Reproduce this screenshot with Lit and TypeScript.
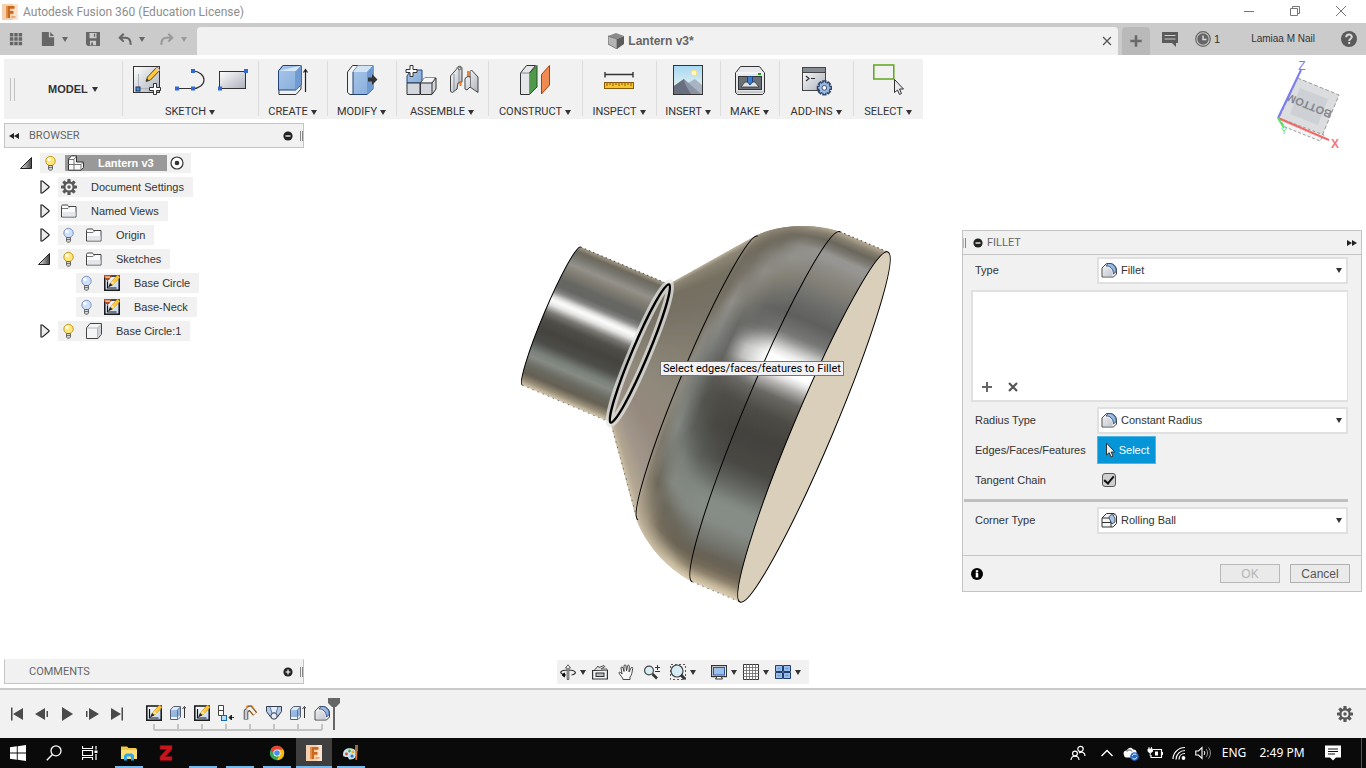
import { LitElement, html, css, svg } from "lit";
import { customElement, state } from "lit/decorators.js";

/* ---------- colour helpers for the shaded solid ---------- */
type RGB = [number, number, number];
type Stop = [number, string];

const rgb = (h: string): RGB => [
  parseInt(h.slice(1, 3), 16),
  parseInt(h.slice(3, 5), 16),
  parseInt(h.slice(5, 7), 16),
];
const mix = (a: RGB, b: RGB, k: number): RGB => [
  a[0] + (b[0] - a[0]) * k,
  a[1] + (b[1] - a[1]) * k,
  a[2] + (b[2] - a[2]) * k,
];
const sample = (p: Stop[], t: number): RGB => {
  for (let i = 1; i < p.length; i++) {
    if (t <= p[i][0]) {
      const k = (t - p[i - 1][0]) / (p[i][0] - p[i - 1][0]);
      return mix(rgb(p[i - 1][1]), rgb(p[i][1]), Math.max(0, k));
    }
  }
  return rgb(p[p.length - 1][1]);
};

/* Reflection profiles across the body: -1 is the upper silhouette, 1 the lower one. */
const NECK: Stop[] = [
  [-1, "#a69d89"], [-0.93, "#6b675c"], [-0.85, "#77766f"], [-0.74, "#94928b"], [-0.64, "#827e74"], [-0.5, "#666762"],
  [-0.4, "#666764"], [-0.32, "#858583"], [-0.26, "#d8d8d7"], [-0.21, "#ffffff"], [-0.14, "#e6e6e4"], [-0.04, "#7a7974"], [0.06, "#504e49"],
  [0.22, "#45433e"], [0.38, "#4c4d49"], [0.52, "#7a807a"], [0.6, "#868b84"], [0.72, "#6a6a62"], [0.84, "#655f52"], [0.93, "#9a8f79"], [1, "#d8ccb3"],
];
const RIM: Stop[] = [
  [-1, "#b9ad96"], [-0.95, "#6d685b"], [-0.92, "#6a675e"], [-0.86, "#9c9c98"], [-0.8, "#8e8d88"], [-0.73, "#87837a"],
  [-0.62, "#70716d"], [-0.5, "#5f605e"], [-0.39, "#7a7a78"], [-0.31, "#e2e2e1"], [-0.27, "#ffffff"], [-0.19, "#ffffff"], [-0.14, "#bab9b7"], [-0.07, "#6b6964"],
  [0.03, "#4e4c47"], [0.16, "#44423d"], [0.34, "#494844"], [0.45, "#646863"], [0.55, "#868c86"], [0.66, "#868c86"],
  [0.76, "#757770"], [0.85, "#655f52"], [0.92, "#7b705d"], [0.97, "#c1b498"], [1, "#dfd2b8"],
];
const BEND_D: Stop[] = [
  [-1, "#a99f8b"], [-0.94, "#6d685b"], [-0.87, "#8b8a84"], [-0.8, "#93928d"], [-0.68, "#858176"], [-0.5, "#656663"],
  [-0.38, "#6c6d6b"], [-0.27, "#c0c0bf"], [-0.21, "#c8c8c6"], [-0.12, "#74736f"], [0.02, "#4e4c47"], [0.2, "#494843"],
  [0.38, "#595c58"], [0.52, "#808680"], [0.65, "#858a84"], [0.78, "#6a665a"], [0.88, "#6c6454"], [0.96, "#c1b498"], [1, "#d8ccb3"],
];
const BEND_C: Stop[] = [
  [-1, "#8f8777"], [-0.92, "#6b665a"], [-0.8, "#84827b"], [-0.7, "#8e8d87"], [-0.55, "#7f7d74"], [-0.38, "#686965"],
  [-0.24, "#6a6a68"], [-0.1, "#5c5c58"], [0.1, "#52524d"], [0.28, "#5d5f5b"], [0.45, "#7c827c"], [0.6, "#848981"], [0.74, "#6a665a"],
  [0.86, "#746c5c"], [0.96, "#baae95"], [1, "#cfc3ab"],
];
const BEND_B: Stop[] = [
  [-1, "#8f8777"], [-0.88, "#6e695c"], [-0.7, "#79756b"], [-0.5, "#8f8e88"], [-0.32, "#858783"], [-0.1, "#737672"],
  [0.1, "#757a75"], [0.3, "#838882"], [0.5, "#787971"], [0.66, "#6c675a"], [0.82, "#8c8370"], [0.94, "#b4a890"], [1, "#cfc3ab"],
];
const BEND_A: Stop[] = [
  [-1, "#9a917e"], [-0.85, "#736d60"], [-0.55, "#736e61"], [-0.3, "#86837a"], [-0.05, "#8b8b83"], [0.2, "#87857b"],
  [0.45, "#7d776a"], [0.7, "#8a806f"], [0.9, "#b0a48d"], [1, "#d0c4ab"],
];
const CONE: Stop[] = [
  [-1, "#c3b9a4"], [-0.9, "#8c8575"], [-0.72, "#756f61"], [-0.45, "#777265"], [-0.1, "#868073"], [0.15, "#8f897c"],
  [0.45, "#94897c"], [0.7, "#a1968a"], [0.88, "#b3a792"], [1, "#d8ccb4"],
];
const BEND_KEYS: [number, Stop[]][] = [
  [0, CONE], [0.1, BEND_A], [0.28, BEND_B], [0.5, BEND_C], [0.72, BEND_D], [1, RIM],
];

const RATIO = 0.104;
const bend = (k: number): [number, number] => {
  const m = 1 - k;
  const f = (a: number, b: number, c: number, d: number) =>
    m * m * m * a + 3 * m * m * k * b + 3 * m * k * k * c + k * k * k * d;
  return [f(-126, -110, -80, -52), f(155, 173, 188, 190)];
};

@customElement("solid-scene")
export class SolidScene extends LitElement {
  static styles = css`
    :host { display: block; }
    .scene { display: block; width: 400px; height: 400px; }
  `;

  private grad(id: string, a: number, at: (t: number) => RGB) {
    const n = 60;
    return svg`<linearGradient id=${id} gradientUnits="userSpaceOnUse" x1="0" x2="0" y1=${-a} y2=${a}>
      ${Array.from({ length: n + 1 }, (_, i) => {
        const c = at((i / n) * 2 - 1).map(Math.round);
        return svg`<stop offset=${i / n} stop-color=${`rgb(${c.join(",")})`}></stop>`;
      })}
    </linearGradient>`;
  }

  private body(u: number, a: number, right: number) {
    return `M${u} ${-a}A${a * RATIO} ${a} 0 0 0 ${u} ${a}H${right}V${-a}Z`;
  }

  render() {
    const strips: { u: number; a: number; at: (t: number) => RGB; r: number }[] = [];
    for (let i = 0; i <= 60; i++) {
      const k = i / 60;
      strips.push({ u: -189 + 63 * k, a: 75 + 80 * k, at: (t) => sample(CONE, t), r: -189 + 63 * k + 2 });
    }
    for (let i = 0; i <= 60; i++) {
      const k = i / 60;
      const [u, a] = bend(k);
      let j = 1;
      while (j < BEND_KEYS.length - 1 && k > BEND_KEYS[j][0]) j++;
      const [k0, p0] = BEND_KEYS[j - 1];
      const [k1, p1] = BEND_KEYS[j];
      const q = (k - k0) / (k1 - k0);
      strips.push({ u, a, at: (t) => mix(sample(p0, t), sample(p1, t), q), r: u + 2 });
    }
    const arc = (u: number, a: number) => `M${u} ${-a}A${a * RATIO} ${a} 0 0 0 ${u} ${a}`;
    return html`<svg class="scene" viewBox="510 215 400 400" role="img" aria-label="Lantern body">
      <g transform="translate(814 427) rotate(22.9)">
        <defs>
          ${this.grad("neck", 75, (t) => sample(NECK, t))}
          ${this.grad("rim", 190, (t) => sample(RIM, t))}
          ${strips.map((s, i) => this.grad(`s${i}`, s.a, s.at))}
        </defs>
        <path d=${this.body(-285, 75, -185)} fill="url(#neck)"></path>
        ${strips.map((s, i) => svg`<path d=${this.body(s.u, s.a, s.r)} fill=${`url(#s${i})`}></path>`)}
        <path d=${this.body(-52, 190, 0)} fill="url(#rim)"></path>
        <ellipse rx="19.8" ry="190" fill="#dacfbb" stroke="#000"></ellipse>
        <g fill="none" stroke="#000">
          <path d=${arc(-52, 190)}></path>
          <path d=${arc(-126, 154)}></path>
          <path d=${arc(-285, 75)}></path>
          <path d="M-285 -75H-189" stroke-dasharray="1.5 3" stroke-opacity=".65"></path>
          <path d="M-52 -190H0" stroke-dasharray="1.5 3" stroke-opacity=".65"></path>
          <path d="M-285 75H-189L-126 155M-52 190H0" stroke-dasharray="1.5 4" stroke-opacity=".45"></path>
        </g>
        <ellipse cx="-189" rx="8" ry="76" fill="none" stroke="#e4e4e2" stroke-opacity=".75" stroke-width="8"></ellipse>
        <ellipse cx="-189" rx="8" ry="75" fill="none" stroke="#000" stroke-width="2.4"></ellipse>
      </g>
    </svg>`;
  }
}

/* ---------- icon glyphs ---------- */
const bulb = (on: boolean) => svg`
  <circle cx="7.5" cy="6" r="4.7" fill=${on ? "#ffe877" : "#cfe0fb"} stroke=${on ? "#c39a1c" : "#7d93c4"}></circle>
  <circle cx="6" cy="4.5" r="1.8" fill="#fff" opacity=".85"></circle>
  <path d="M5.5 10.5h4v3.5l-1 1.2H6.5l-1-1.2z" fill="#d5d5d5" stroke="#5c5c5c" stroke-width=".9"></path><path d="M5.5 12.5h4" stroke="#5c5c5c" stroke-width=".8"></path>`;

const gear = (c: string, hole: string) => svg`
  <g fill=${c}>${[0, 45, 90, 135].map((a) => svg`<rect x="6.4" y="0" width="3.2" height="16" rx=".6" transform=${`rotate(${a} 8 8)`}></rect>`)}
  <circle cx="8" cy="8" r="5.7"></circle></g><circle cx="8" cy="8" r="3.5" fill=${hole}></circle><circle cx="8" cy="8" r="1.7" fill=${c}></circle>`;

const extrude = svg`
  <path d="M.5 4.5L3.5 1.500H10.500V12l-2.500 2.500H.5z" fill="#f4f5f7" stroke="#566073"></path>
  <path d="M1 5l3-3H10v8.500L7.500 12H1z" fill="url(#gBlue)"></path><path d="M1 5l3-3h6L7.500 5z" fill="#dce8f7"></path>
  <path d="M7.500 5v9.500M7.500 5L10.500 2" fill="none" stroke="#54709b" stroke-width=".9"></path>
  <path d="M14.500 13V2.500" stroke="#333"></path><path d="M12.500 4l2-2.500 1.500 2" fill="none" stroke="#333"></path>`;

const sketchSmall = svg`
  <rect x=".8" y="1" width="14.4" height="14.2" fill="url(#gPale)" stroke="#111" stroke-width="1.5"></rect>
  <path d="M3.500 4v9h9" fill="none" stroke="#111" stroke-width="1.2"></path>
  <path d="M5.500 11l1.500-4L13.500 0l2.500 2.300L9.500 9.500z" fill="#ffc93a" stroke="#c8921c" stroke-width=".6"></path><path d="M4 12.500l2-4.500 2.500 2.300z" fill="#222"></path><path d="M7 7.300l1.200-1.300 2.500 2.300-1.200 1.200z" fill="#ffe9a8"></path>`;

const filletIcon = svg`
  <path d="M1 15V6l4.500-4.500h4c3.500.5 6 3.200 6 7V12l-3 3z" fill="#f5f6f8" stroke="#444"></path>
  <path d="M5 4c3.500-.5 7.300 2.500 7.500 8l2.700-2.500c.2-4.500-2.500-7.500-6.200-8H7z" fill="url(#gBlue)" stroke="#2c4a78" stroke-width=".9"></path>
  <path d="M2 14.300V7l2-2c4.500 0 7.500 3 7.700 9.300z" fill="url(#gPlate)"></path>`;

const fusion = svg`
  <rect width="16" height="16" fill="#fbe3cf"></rect><path d="M0 0h11v16H0z" fill="#f5cfae"></path>
  <path d="M4.500 2h8v2.800H8v2.300h3.500v2.600H8V14H4.500z" fill="#c9671c"></path><path d="M4.500 2H6v12H4.500z" fill="#e48a3a"></path>
  <path d="M9.500 13h4" stroke="#d78b52" stroke-width="1.200"></path>`;

const ICONS: Record<string, [number, unknown]> = {
  fusion: [16, fusion],
  grid: [16, svg`<path fill="#666" d="M1 1h4v4H1zM6 1h4v4H6zM11 1h4v4h-4zM1 6h4v4H1zM6 6h4v4H6zM11 6h4v4h-4zM1 11h4v4H1zM6 11h4v4H6zM11 11h4v4h-4z"></path>`],
  file: [16, svg`<path fill="#666" d="M1 0h8v6h6v10H1z"></path><path fill="#666" d="M10.500 0L15 4.500h-4.500z"></path>`],
  save: [16, svg`<path fill="#666" fill-rule="evenodd" d="M0 0h16v16H2l-2-2zM4 1v6h8V1zM4.500 10v5h7v-5zM9 2h1.500v3.500H9z"></path><path d="M6 12h2v3H6z" fill="#666"></path>`],
  undo: [16, svg`<path d="M6.500 2L2 6.500 6.500 11M2.500 6.500h6c4 0 6 2.500 6 8" fill="none" stroke="#666" stroke-width="2.400"></path>`],
  redo: [16, svg`<path d="M9.500 2L14 6.500 9.500 11M13.500 6.500h-6c-4 0-6 2.500-6 8" fill="none" stroke="#999" stroke-width="2.400"></path>`],
  docCube: [16, svg`<path d="M0 3l8-3 8 3-7 3z" fill="#8a8a8a"></path><path d="M0 3l9 3v10l-9-5z" fill="#b4b4b4" stroke="#666" stroke-width=".8"></path><path d="M9 6l7-3v8l-7 5z" fill="#5c5c5c"></path>`],
  cross: [16, svg`<path d="M3.500 3.500l9 9M12.500 3.500l-9 9" stroke="#555" stroke-width="1.500"></path>`],
  plusTab: [16, svg`<path d="M8 1.500v13M1.500 8h13" stroke="#6a6a6a" stroke-width="3"></path>`],
  comment: [16, svg`<path d="M0 1h16v11h-2v4l-4-4H0z" fill="#5a5a5a"></path><path d="M2.500 4.500h11M2.500 8h11" stroke="#ccc" stroke-width="1.200"></path>`],
  clock: [16, svg`<circle cx="8" cy="8" r="7.300" fill="none" stroke="#666" stroke-width="1.200"></circle><circle cx="8" cy="8" r="5.700" fill="#666"></circle><path d="M8 4.500V8.500h3.500" fill="none" stroke="#ddd" stroke-width="1.400"></path>`],
  help: [16, svg`<circle cx="8" cy="8" r="8" fill="#5a5a5a"></circle><path d="M5.200 6.200C5.200 2.600 11 2.800 10.800 6 10.700 7.800 8.200 7.800 8.200 10" fill="none" stroke="#d8d8d8" stroke-width="2"></path><rect x="7.200" y="11" width="2" height="2" fill="#d8d8d8"></rect>`],
  min: [16, svg`<path d="M3 7.500h10" stroke="#777"></path>`],
  restore: [16, svg`<path d="M3.500 5.500h7v7h-7zM5.500 5V3.500h7v7H11" fill="none" stroke="#777" transform="translate(0 -1)"></path>`],
  close: [16, svg`<path d="M3 2l10 10M13 2L3 12" stroke="#777"></path>`],
  sketch: [32, svg`<rect x="2.500" y="2.500" width="26" height="26" fill="url(#gGray)" stroke="#333"></rect>
    <path d="M7.500 10v14.500H22" fill="none" stroke="#aeb3bb"></path><rect x="5" y="23" width="4" height="4" fill="#3f8fe0" stroke="#235"></rect>
    <path d="M15 17.500l1.500-4.500L26 3l3 3-9.500 10z" fill="#ffca3a" stroke="#5b4716"></path><path d="M24.500 4.500L26 3l3 3-1.500 1.500z" fill="#e8cfc4"></path><path d="M15 17.500l1-3 2.200 2z" fill="#333"></path>
    <path d="M22.500 19.500h3v4h4v3h-4v4h-3v-4h-4v-3h4z" fill="#fff" stroke="#333"></path>`],
  arc: [32, svg`<path d="M3 24.500h16c6 0 11-4 11-8.500S25 7 19 7" fill="none" stroke="#333" stroke-width="1.200"></path><path d="M1 22.500h4v4H1zM17 22.500h4v4h-4zM17 5h4v4h-4z" fill="#2f6bd0"></path>`],
  rect: [32, svg`<rect x="2.500" y="7.500" width="26" height="17" fill="url(#gGray)" stroke="#333"></rect><path d="M27 5h4v4h-4zM1 22.500h4v4H1z" fill="#2f6bd0"></path>`],
  create: [32, svg`<path d="M1.500 7l4.500-5.500h18V25l-5 5.500h-17z" fill="#eef0f3" stroke="#333"></path><path d="M1.500 7l4.500-5.500h18V21l-5 5h-17.500z" fill="url(#gBlue)" stroke="#23447a"></path><path d="M1.500 7h17.500L24 1.500z" fill="#d7e6f8"></path><path d="M19 7v19" stroke="#5b82b8"></path><path d="M19 7l5-5.500V21l-5 5z" fill="#6f9bd2"></path>
    <path d="M28.500 28V6M26.500 8.500l2-3 2 3" fill="none" stroke="#222" stroke-width="1.200"></path>`],
  modify: [32, svg`<path d="M1.500 8l5-6.500h10L11 8v22.500H4l-2.500-2z" fill="#f2f3f5" stroke="#333"></path><path d="M7 8l5-6.500h15V25l-6 5.500H7z" fill="url(#gBlue)" stroke="#23447a"></path><path d="M7 8h14l6-6.500H12z" fill="#d4e4f7"></path><path d="M21 8l6-6.500V25l-6 5.500z" fill="#6f9bd2"></path><path d="M22 13.500h4V10l5.500 5.500L26 21v-3.500h-4z" fill="#333"></path>`],
  assemble: [32, svg`<path d="M2 12l4-6h11v13H2z" fill="url(#gBlue)" stroke="#23447a"></path><path d="M2 19h13v11.500H2z" fill="#d3d6dc" stroke="#333"></path><path d="M15.500 19l4-5H31v11l-4 5.500H15.500z" fill="#d3d6dc" stroke="#333"></path><path d="M15.500 19H27v11M27 19l4-5" fill="none" stroke="#333"></path><path d="M16.500 18l3-4h10l-3 4z" fill="#f4f5f6"></path>
    <path d="M5 1.500h3v4h4v3H8v4H5v-4H1v-3h4z" fill="#fff" stroke="#333"></path>`],
  joint: [32, svg`<path d="M2.500 12L9 4.500c0-3 5-3 5 0V18l-4 1-1 6-4.500 3.500-2-1z" fill="url(#gGray)" stroke="#444"></path><path d="M6 10v17M11 4v14" stroke="#8b8f96"></path><circle cx="11.500" cy="4.500" r="1.300" fill="#ddd" stroke="#444" stroke-width=".8"></circle><path d="M12.500 17v5M20 7v7" stroke="#f07316" stroke-width="1.800"></path>
    <path d="M17 25V15c0-2 4-3 5-2V7.500L23.500 6 30 13v15.500L22 23l-3 3z" fill="url(#gGray)" stroke="#444"></path><path d="M22.500 12v11" stroke="#777"></path>`],
  construct: [32, svg`<path d="M1.500 9l6-7.500h9l-6 7.500v21.500h-9z" fill="#e4e6e9" stroke="#333"></path><path d="M10.500 9l7.500-7.500V23l-7.500 7.500z" fill="#4f9a4a" stroke="#24521f"></path><path d="M1.500 9h9v21.500" fill="none" stroke="#888"></path><path d="M22.500 10.500L30.500 1.500V21l-8 9z" fill="#ee8a52" stroke="#a3430f"></path>`],
  inspect: [32, svg`<path d="M2 10.500h28M2 8v5.500M30 8v5.500" stroke="#333" stroke-width="1.400"></path><rect x="1.500" y="18.500" width="29" height="6" fill="#f4c62a" stroke="#8a5a10"></rect><path d="M4 19v3M7 19v2M10 19v3M13 19v2M16 19v3M19 19v2M22 19v3M25 19v2M28 19v3" stroke="#8a5a10"></path>`],
  insert: [32, svg`<rect x="1.500" y="1.500" width="29" height="29" fill="url(#gSky)" stroke="#333"></rect><circle cx="22" cy="9" r="3" fill="#fff7c9" stroke="#f5d97a"></circle><path d="M16 19l7-4 7 6v9H18z" fill="#a8b4c4"></path><path d="M2 22l10-7 17 15H2z" fill="#8b93a3"></path><path d="M2 22l10-7 1 5 6 10H2z" fill="#676f80"></path>`],
  make: [32, svg`<path d="M1.500 9l5-6.500h19l5 6.500v19.500l-2 2h-25l-2-2z" fill="#e6e8ec" stroke="#333"></path><path d="M2 9h28" stroke="#fff"></path><rect x="4.500" y="12.500" width="23" height="13" fill="#6a7078" stroke="#333"></rect><path d="M7 23l4-5h10l4 5z" fill="#dfe3e8" stroke="#333" stroke-width=".8"></path><path d="M2 28h28" stroke="#aaa"></path><path d="M13.500 12.500h5V18L16 21l-2.500-3z" fill="#3c7fd0" stroke="#1e4680"></path><rect x="24" y="9" width="3" height="2" fill="#1a9a2a"></rect>`],
  addins: [32, svg`<rect x="2.500" y="3.500" width="23" height="23" fill="url(#gGray)" stroke="#444"></rect><path d="M3 4h22v4H3z" fill="#868c96"></path><path d="M3 8.500h22" stroke="#444"></path><path d="M6 12l3 2.500L6 17M11 14.500h4" fill="none" stroke="#333" stroke-width="1.200"></path>
    <g transform="translate(17 16.500) scale(.92)"><g stroke="#2b4268" stroke-width="1.500">${[0, 45, 90, 135].map((a) => svg`<rect x="6.400" y=".5" width="3.200" height="15" fill="#9fbbe3" transform=${`rotate(${a} 8 8)`}></rect>`)}</g><circle cx="8" cy="8" r="5.600" fill="#9fbbe3"></circle><circle cx="8" cy="8" r="2.600" fill="#fff" stroke="#2b4268"></circle></g>`],
  select: [32, svg`<rect x="1.800" y="1" width="20" height="14" fill="none" stroke="#5fa51c" stroke-width="1.500"></rect><path d="M22.500 15.500v13l3-2.500 2 4.500 2-1-2-4.500h4z" fill="#e9ebee" stroke="#333"></path>`],
  bulbOn: [16, bulb(true)],
  bulbOff: [16, bulb(false)],
  gear: [16, gear("#585858", "#f1f1f1")],
  component: [16, svg`<path d="M.5 4L3.500.8H8.500V7H15.500V12.500l-2.500 2.700H.5z" fill="#fafafa" stroke="#333"></path><path d="M.5 4.500H6v10.500M6 4.500L8.500 1M.5 9.500h12.500V15M13 9.500L15.500 7" fill="none" stroke="#666" stroke-width=".9"></path>`],
  folder: [16, svg`<path d="M.5 3.500c0-1 .5-1.500 1.500-1.500H6c1 0 1 .5 1.500 1.500h7.500V14H.5z" fill="#fafbfc" stroke="#444"></path><path d="M1 5.500H7L8.500 4" fill="none" stroke="#777"></path><path d="M1.500 9h13v4.500h-13z" fill="#e3e6ea"></path>`],
  body: [16, svg`<path d="M.5 5l3.500-4.500h11.500V11L12 15.500H.5z" fill="#f4f5f6" stroke="#444" stroke-linejoin="round"></path><path d="M11.500 5L15 1.500V11l-3.500 4z" fill="#cfd2d6"></path><path d="M11.500 5v10M1.500 5h10L15 1.500" fill="none" stroke="#aaa" stroke-width=".8"></path>`],
  sketchPin: [16, svg`${sketchSmall}<path d="M0 .8h7L5.500 3.500h-4zM1.500 4.500h4" fill="#e8c39a" stroke="#b8491c"></path><path d="M3.500 4v3" stroke="#b8491c"></path>`],
  sketchS: [16, sketchSmall],
  extrude: [16, extrude],
  fillet: [16, filletIcon],
  ball: [16, svg`<path d="M1 6l4.500-4.500H13L15.500 4v7.500L12 15H1z" fill="#f6f7f8" stroke="#333"></path><path d="M1 6h9v9M1 10.500h9M10 6l4-4.500" fill="none" stroke="#333"></path><path d="M8 6c0-2 1.500-3.500 3.500-3.500L14 6v4l-3 2z" fill="#a9c5ea" stroke="#333" stroke-width=".8"></path>`],
  cursor: [16, svg`<path d="M4.500 1v12l2.700-2.300L9 15l2-.9-1.800-4.100h3.600z" fill="#ececec" stroke="#333"></path>`],
  target: [16, svg`<circle cx="8" cy="8" r="6" fill="#fff" stroke="#333" stroke-width="1.200"></circle><circle cx="8" cy="8" r="2.300" fill="#333"></circle>`],
  tri: [16, svg`<path d="M4 2v12h1.500L12 8.500v-1L5.500 2z" fill="#ececec" stroke="#222" stroke-width="1.200"></path>`],
  triOpen: [16, svg`<path d="M1.500 13.500h11v-11z" fill="url(#gTri)" stroke="#222"></path>`],
  minus: [10, svg`<circle cx="5" cy="5" r="4.600" fill="#222"></circle><path d="M2.500 5h5" stroke="#fff" stroke-width="1.300"></path>`],
  plus: [10, svg`<circle cx="5" cy="5" r="4.600" fill="#222"></circle><path d="M2.500 5h5M5 2.500v5" stroke="#fff" stroke-width="1.200"></path>`],
  info: [12, svg`<circle cx="6" cy="6" r="6" fill="#000"></circle><path d="M5 5h2v4H5zM4.500 5H6M4.500 9h3M5 2.500h2v1.500H5z" fill="#fff" stroke="#fff" stroke-width=".5"></path>`],
  back: [10, svg`<path d="M5 2v6L0 5zM10 2v6L5 5z" fill="#222"></path>`],
  fwd: [10, svg`<path d="M0 2v6l5-3zM5 2v6l5-3z" fill="#222"></path>`],
  add: [12, svg`<path d="M6 1v10M1 6h10" stroke="#666" stroke-width="2"></path>`],
  del: [12, svg`<path d="M2 2l8 8M10 2l-8 8" stroke="#555" stroke-width="2.200"></path>`],
  orbit: [16, svg`<path d="M4 10.500C-1 9.500-.5 6 8 6s9.500 4 3.500 5" fill="none" stroke="#333" stroke-width="1.200"></path><path d="M7.200 15.500V4H5.500L8 .8 10.500 4H8.800v11.500z" fill="#fff" stroke="#333" stroke-width=".8"></path><path d="M6 11H3M4.500 9L2 11l2.500 2z" fill="#111" stroke="#111"></path>`],
  look: [16, svg`<path d="M.6 6.500h14.800V15H.6z" fill="#f4f5f6" stroke="#333" stroke-width="1.200"></path><path d="M2.500 6L6 2l1 1.500L12 1.500l1 1-4 2.500h6v1.500" fill="#ddd" stroke="#555"></path><rect x="4" y="9" width="8" height="3.500" fill="#b5bac3" stroke="#333"></rect>`],
  hand: [16, svg`<path d="M5 15.500c0-2-3-4-4-6.500 0-1.500 1.500-1 3 1L3 4c0-1.500 1.500-1.500 2 0l1 3.500V2c0-1.500 2-1.500 2 0l.5 5L9.500 2c.5-1.500 2-1 1.800.5L11 8l2-4c.6-1.300 2-.8 1.700.5C14 8 14 11 12 13v2.500z" fill="#f7f7f7" stroke="#333" stroke-width=".9"></path>`],
  zoomPm: [16, svg`<circle cx="5" cy="6.500" r="4.400" fill="#d6edf5" stroke="#444" stroke-width="1.200"></circle><path d="M8.500 10l4.500 4.500" stroke="#333" stroke-width="2.600"></path><path d="M13.500 1v5M11 3.500h5M11 7.500h5" stroke="#333"></path>`],
  fit: [16, svg`<path d="M.5 4V.5h15v15H.5z" fill="none" stroke="#555" stroke-dasharray="2 2"></path><circle cx="7" cy="7" r="6" fill="#d6edf5" stroke="#444" stroke-width="1.200"></circle><path d="M11 11l4 4" stroke="#333" stroke-width="3"></path>`],
  display: [16, svg`<rect x=".6" y="1.600" width="15" height="11" fill="#e8ebef" stroke="#333" stroke-width="1.200"></rect><rect x="2.500" y="3.500" width="11" height="7.500" fill="#9dbfea" stroke="#2b58a0"></rect><path d="M6 12.500h4l1.500 2.500h-7z" fill="#fff" stroke="#333"></path>`],
  mesh: [16, svg`<path d="M.5.5h15v15H.5z" fill="#fff" stroke="#333"></path><path d="M3.500 0v16M6.500 0v16M9.500 0v16M12.500 0v16M0 3.500h16M0 6.500h16M0 9.500h16M0 12.500h16" stroke="#666" stroke-width=".8"></path>`],
  panes: [16, svg`<path d="M.5 1.500h7v6h-7zM8.500 1.500h7v6h-7zM.5 8.500h7v6h-7zM8.500 8.500h7v6h-7z" fill="#9dbfea" stroke="#1f3f70"></path><path d="M2.500 4.500h3M10.500 4.500h3M2.500 11.500h3M10.500 11.500h3" stroke="#6d99d6" stroke-width="1.500"></path>`],
  first: [16, svg`<path d="M2 1.500h1.500v13H2zM14 2v12L4 8z" fill="#4a4a4a"></path>`],
  prev: [16, svg`<path d="M11 2v12L1 8zM12.500 5H14v6h-1.500z" fill="#4a4a4a"></path>`],
  play: [16, svg`<path d="M3 1v14l11-7z" fill="#4a4a4a"></path>`],
  next: [16, svg`<path d="M5 2v12l10-6zM2 5h1.500v6H2z" fill="#4a4a4a"></path>`],
  last: [16, svg`<path d="M12.500 1.500H14v13h-1.500zM2 2v12l10-6z" fill="#4a4a4a"></path>`],
  move: [16, svg`<path d="M.5.5h5v10h-5zM.5 5.500h5" fill="#fff" stroke="#444"></path><rect x="3.500" y="10.500" width="5" height="5" fill="#b7dcf7" stroke="#1467b8"></rect><path d="M16 12.500h-4M13.500 10v5L11 12.500z" fill="#111" stroke="#111" stroke-width=".8"></path>`],
  jointS: [16, svg`<g fill="none" stroke-linejoin="round"><path d="M5 4l3-1.500L13 9" stroke="#ef8a17" stroke-width="6"></path><path d="M4 14.500V6L8 3l5 6" stroke="#444" stroke-width="4.500"></path><path d="M5 4.500L8 3l5 6" stroke="#fbeedd" stroke-width="3"></path><path d="M4 14V6l2-1.500" stroke="#c9ccd1" stroke-width="2.800"></path></g>`],
  revolve: [16, svg`<path d="M.5 1.500h15v5L11.500 12c-2 2-5 2-7 0L.5 6.500z" fill="#b7cae6" stroke="#333c4d"></path><path d="M4 2h8L10 7.500H6z" fill="#e4ecf7"></path><path d="M4 2l2 6M12 2l-2 6" fill="none" stroke="#5c78a5"></path><circle cx="8" cy="11" r="3.200" fill="#e9edf3" stroke="#333c4d"></circle>`],
  win: [16, svg`<path d="M0 2.300L6.800 1.300V7.600H0zM7.700 1.200L16 0V7.600H7.700zM0 8.400h6.800v6.300L0 13.700zM7.700 8.400H16V16l-8.300-1.200z" fill="#fff"></path>`],
  search: [16, svg`<circle cx="10" cy="5.800" r="5" fill="none" stroke="#fff" stroke-width="1.300"></circle><path d="M6.500 9.500L.8 15.200" stroke="#fff" stroke-width="1.400"></path>`],
  task: [16, svg`<path d="M.5 5.500h10v5h-10zM.5 1v2.500h10V1M.5 15v-2.500h10V15M14 1v3.500M14 9v6" fill="none" stroke="#fff" stroke-width="1.200"></path><path d="M12.500 5.500h3v2.500h-3z" fill="#fff"></path>`],
  explorer: [16, svg`<path d="M0 1.500h6l1.500 1.500H15l1 1.500V14H0z" fill="#f3c846"></path><path d="M0 5h16v9H0z" fill="#fddf77"></path><path d="M3 15.500V10.500l2-2h6l2 2v5h-3v-4H6v4z" fill="#2fa8e8"></path>`],
  zed: [16, svg`<path d="M2 .5h12v4L7.500 11.500H14v4H2v-4L8.500 4.500H2z" fill="#c9141c" stroke="#7a0a10" stroke-width=".6"></path>`],
  chrome: [16, svg`<circle cx="8" cy="8" r="7.200" fill="#34a853"></circle><path d="M1.800 4.400a7.200 7.200 0 0 1 12.400 0L8 8z" fill="#ea4335"></path><path d="M14.300 4.500A7.200 7.200 0 0 1 8 15.200L11 8l-3-3.500z" fill="#fbbc05"></path><path d="M1.800 4.400L5.500 10 8 5h6.600z" fill="#ea4335"></path><circle cx="8" cy="8" r="3.600" fill="#fff"></circle><circle cx="8" cy="8" r="2.800" fill="#4a8af4"></circle>`],
  paint: [16, svg`<path d="M0 9.500C0 4 5 2.500 9 3.500s5 4 4 7-3 4-6 4C5 14.500 6 12 4 12S0 12 0 9.500z" fill="#c9e3ef"></path><circle cx="3.500" cy="9" r="1.400" fill="#e0482c"></circle><circle cx="6.500" cy="6" r="1.400" fill="#49a942"></circle><circle cx="10" cy="7" r="1.400" fill="#f2b21b"></circle><circle cx="9" cy="11" r="1.600" fill="#2d6fc4"></circle><path d="M12.200 6h2.300L14 15h-1.500z" fill="#d9752b"></path><path d="M12 0h3v6h-3z" fill="#9a6a3c"></path>`],
  people: [16, svg`<circle cx="10.500" cy="4" r="2.700" fill="none" stroke="#fff" stroke-width="1.200"></circle><circle cx="5" cy="8.500" r="2.400" fill="none" stroke="#fff" stroke-width="1.200"></circle><path d="M1 15c.3-5 7.700-5 8 0M9 8c3-2 6-.5 6 3" fill="none" stroke="#fff" stroke-width="1.200"></path>`],
  chev: [16, svg`<path d="M2.500 11L8 5.500 13.500 11" fill="none" stroke="#fff" stroke-width="1.400"></path>`],
  cloud: [16, svg`<path d="M1 10c-1.500-3 1-5 3-4.500C5 2 9 2 10 4.500c2-.5 4 1 3.500 4L9 12.500H3C2 12.500 1 11.500 1 10z" fill="#fff"></path><path d="M4 6.500c1-2 4-2 5 0" fill="none" stroke="#222" stroke-width=".8"></path><circle cx="11.500" cy="11.500" r="4.300" fill="#2468c8"></circle><path d="M9.300 11c.5-2.500 3.500-2.500 4.300-.8M13.700 12c-.5 2.500-3.500 2.500-4.300.8" fill="none" stroke="#fff"></path>`],
  battery: [16, svg`<path d="M6 4.500h8.500v8H4V10M15.500 7v3" fill="none" stroke="#fff" stroke-width="1.200"></path><path d="M8 6.500h3v4H8z" fill="#fff"></path><path d="M1 4h4.500v2.500L3.200 8 1 6.500zM2 2v2M4.500 2v2M3.200 8v3" fill="#fff" stroke="#fff" stroke-width=".9"></path>`],
  wifi: [16, svg`<g fill="none" stroke="#fff" stroke-width="1.200"><path d="M2 14C2 7.500 7.500 2.500 14 2.500"></path><path d="M5 14.500c0-5 4-9 9-9"></path><path d="M8 14.500c0-3.500 2.500-6 6-6"></path></g><circle cx="12.500" cy="13" r="1.900" fill="#fff"></circle>`],
  vol: [16, svg`<path d="M.8 6H3.500L7 2.500v11L3.500 10H.8z" fill="none" stroke="#fff" stroke-width="1.100"></path><path d="M9 6c1 1 1 3 0 4" fill="none" stroke="#fff"></path><path d="M11 4c2 2 2 6 0 8M13.500 2.500c2.500 3 2.500 8 0 11" fill="none" stroke="#999"></path>`],
  notif: [16, svg`<path d="M0 .5h16v12h-5L8 15.500l-3-3H0z" fill="#fff"></path><path d="M3 4h10M3 6.500h10M3 9h7" stroke="#111" stroke-width="1.200"></path>`],
};

interface Row { level: number; label: string; icon: string; bulb?: "bulbOn" | "bulbOff"; toggle?: "tri" | "triOpen"; }

const TREE: Row[] = [
  { level: 1, label: "Document Settings", icon: "gear", toggle: "tri" },
  { level: 1, label: "Named Views", icon: "folder", toggle: "tri" },
  { level: 1, label: "Origin", icon: "folder", bulb: "bulbOff", toggle: "tri" },
  { level: 1, label: "Sketches", icon: "folder", bulb: "bulbOn", toggle: "triOpen" },
  { level: 2, label: "Base Circle", icon: "sketchPin", bulb: "bulbOff" },
  { level: 2, label: "Base-Neck", icon: "sketchPin", bulb: "bulbOff" },
  { level: 1, label: "Base Circle:1", icon: "body", bulb: "bulbOn", toggle: "tri" },
];

const TOOLS: [string, string[]][] = [
  ["SKETCH", ["sketch", "arc", "rect"]],
  ["CREATE", ["create"]],
  ["MODIFY", ["modify"]],
  ["ASSEMBLE", ["assemble", "joint"]],
  ["CONSTRUCT", ["construct"]],
  ["INSPECT", ["inspect"]],
  ["INSERT", ["insert"]],
  ["MAKE", ["make"]],
  ["ADD-INS", ["addins"]],
  ["SELECT", ["select"]],
];

@customElement("app-root")
export class AppRoot extends LitElement {
  @state() private tangent = true;

  static styles = css`
    :host {
      display: flex; flex-direction: column; height: 100vh; overflow: hidden;
      background: #fff; color: #333;
      font: 11px/14px "Liberation Sans", Arial, sans-serif;
    }
    * { box-sizing: border-box; }
    button { font: inherit; color: inherit; background: none; border: 0; padding: 0; margin: 0; display: flex; align-items: center; justify-content: center; }
    svg { display: block; flex: none; }
    .defs { position: absolute; }
    .caret { width: 6px; height: 5px; }

    .title { height: 23px; flex: none; display: flex; align-items: center; gap: 5px; padding: 0 2px; color: #8d8d8d; font: 12px/16px Roboto, sans-serif; }
    .title .name { flex: 1; }
    .title button { width: 46px; height: 22px; }
    .wins { display: flex; }

    .tabs { height: 32px; flex: none; display: flex; align-items: flex-end; background: #cbcbcb; }
    .quick { display: flex; align-items: center; gap: 18px; padding: 0 10px 0 9px; align-self: center; }
    .quick button { gap: 7px; }
    .pair { display: flex; gap: 15px; }
    .tab { flex: 1; height: 28px; background: #f1f1f1; border-radius: 4px 4px 0 0; display: flex; align-items: center; padding-left: 10px; }
    .tab .doc { flex: 1; display: flex; align-items: center; justify-content: center; gap: 4px; color: #666; font-weight: bold; font-size: 12px; }
    .tab .x { width: 23px; height: 28px; }
    .newtab { width: 28px; height: 28px; margin-left: 4px; background: #b9b9b9; border-radius: 4px 4px 0 0; }
    .account { width: 216px; height: 32px; display: flex; align-items: center; padding: 0 9px 0 12px; }
    .jobs { gap: 3px; margin-left: 17px; }
    .user { margin: 0 auto 0 31px; font-size: 10px; }

    .work { flex: 1; min-height: 0; position: relative; display: flex; flex-direction: column; padding: 4px; }
    .ribbon { height: 60px; flex: none; width: max-content; background: #f1f1f1; display: grid; grid-template-columns: 118px 136px 69px 69px 92px 94px 74px 64px 59px 74px 70px; }
    .group { display: flex; flex-direction: column; align-items: center; justify-content: space-between; padding-top: 5px; position: relative; }
    .group::before { content: ""; position: absolute; left: 0; top: 2px; bottom: 3px; width: 1px; background: #dcdcdc; }
    .icons { display: flex; gap: 11px; }
    .menu { gap: 3px; font: 11px/14px Roboto, sans-serif; }
    .mode { display: flex; align-items: center; padding-left: 6px; }
    .grip { width: 5px; height: 23px; border: solid #c2c2c2; border-width: 0 1px; }
    .mode button { margin-left: 33px; gap: 4px; font-weight: bold; }

    .bar { width: 300px; height: 25px; flex: none; display: flex; align-items: center; border: 1px solid #c4c4c4; background: #f1f1f1; padding: 0 0 0 4px; color: #666; font: 11px/14px Roboto, sans-serif; }
    .bar .cap { flex: 1; margin-left: 10px; }
    .bar.comments .cap { margin-left: 20px; }
    .bar.comments { border-top-color: #f1f1f1; }
    .edge { width: 3px; height: 10px; border: solid #888; border-width: 0 1px; margin-left: 7px; }
    .browser { margin-top: 4px; }

    .tree { list-style: none; margin: 5px 0 0; padding: 0 0 0 14px; flex: 1; }
    .row { display: flex; align-items: center; height: 20px; margin-bottom: 4px; }
    .toggle { width: 18px; height: 16px; margin-right: 4px; }
    .item { display: flex; align-items: center; height: 20px; background: #f1f1f1; padding-right: 9px; }
    .l1 { padding-left: 18px; }
    .l2 { padding-left: 36px; }
    .slot { width: 22px; display: flex; justify-content: center; }
    .eye { margin-right: 3px; }
    .text { margin-left: 11px; }
    .root .item { padding-right: 6px; }
    .picked { display: flex; align-items: center; height: 16px; background: #999; color: #fff; font-weight: bold; padding-right: 13px; margin-right: 2px; }

    .canvas { position: absolute; left: calc(50% - 173px); top: 160px; }
    .cube { position: absolute; right: 20px; top: 0; width: 76px; height: 100px; }
    .hint { position: absolute; left: calc(50% - 23px); top: 306px; border: 1px solid #767676; background: #f2f2f4; color: #000; padding: 0 2px; font: 11px/13px Roboto, sans-serif; white-space: nowrap; }

    .bottom { display: grid; grid-template-columns: 1fr auto 1fr; align-items: end; position: relative; }
    .nav { display: flex; align-items: center; height: 24px; width: 252px; background: #f1f1f1; padding-left: 3px; gap: 10px; }
    .nav .drop { gap: 4px; margin-right: -4px; }
    .nav .view { margin-left: 9px; }

    .panel { position: absolute; right: 4px; top: 175px; width: 400px; background: #f1f1f1; border: 1px solid #c4c4c4; }
    .phead { display: flex; align-items: center; height: 24px; border-bottom: 1px solid #c4c4c4; padding: 0 4px 0 0; color: #666; font: 11px/14px Roboto, sans-serif; }
    .phead h2 { flex: 1; margin: 0 0 0 4px; font: inherit; }
    .phead .edge { margin: 0 7px 0 0; border-left-color: #bbb; }
    .form { padding: 0 13px 20px 12px; }
    .field { display: grid; grid-template-columns: 122px 1fr; align-items: center; height: 30px; }
    .combo { height: 27px; display: flex; align-items: center; border: 2px solid #e0e0e0; background: #fff; padding: 0 4px 0 2px; }
    .combo select { flex: 1; appearance: none; border: 0; background: none; font: inherit; color: #333; padding: 0 0 0 4px; height: 23px; outline: 0; }
    .combo .caret { pointer-events: none; }
    .list { height: 112px; margin: 5px 0 3px -4px; border: 2px solid #e0e0e0; border-right-width: 1px; background: #fff; display: flex; align-items: flex-end; gap: 14px; padding: 0 0 7px 8px; }
    .pick { justify-self: start; width: 59px; height: 28px; gap: 1px; background: #0696d7; color: #fff; border: 1px solid #4cb6e8; padding-right: 2px; }
    .tick { appearance: none; width: 14px; height: 14px; margin: 0 0 0 5px; border: 1px solid #555; border-radius: 3px; background: #cfcfcf; display: grid; place-items: center; }
    .tick:checked::after { content: ""; width: 4px; height: 8px; border: solid #111; border-width: 0 2px 2px 0; transform: rotate(40deg); margin-bottom: 2px; }
    .rule { height: 3px; margin: 4px 0 3px -11px; border: 0; background: #c0c0c0; }
    .foot { display: flex; align-items: center; gap: 10px; height: 36px; border-top: 1px solid #c4c4c4; padding: 0 11px 0 8px; }
    .foot svg { margin-right: auto; }
    .foot button { width: 60px; height: 19px; border: 1px solid #b0b0b0; background: #eaeaea; color: #555; font-size: 12px; }
    .foot button:disabled { color: #b5b5b5; border-color: #b8b8b8; }

    .time { height: 50px; flex: none; display: flex; align-items: center; border-top: 2px solid #c9c9c9; background: #f1f1f1; padding: 0 13px 0 9px; }
    .player { display: flex; gap: 9px; }
    .steps { display: flex; margin-left: 17px; flex: 1; }
    .step { width: 24px; height: 34px; display: flex; flex-direction: column; align-items: center; justify-content: space-between; padding-top: 8px; }
    .step::after { content: ""; width: 24px; height: 7px; background: linear-gradient(#c4c4c4, #c4c4c4) 50% 0 / 2px 6px no-repeat, linear-gradient(#c4c4c4, #c4c4c4) 0 100% / 24px 2px no-repeat; }
    .step:first-child::after { background-position: 50% 0, 12px 100%; }
    .step:nth-child(8)::after { background-position: 50% 0, -12px 100%; }
    .marker { margin-left: -6px; }

    .task { height: 30px; flex: none; display: flex; align-items: stretch; background: #0a0a0a; color: #fff; font: 12px/30px "Noto Sans", sans-serif; }
    .task button { width: 36px; border-bottom: 2px solid transparent; padding-top: 2px; }
    .apps { display: flex; gap: 1px; margin-left: 3px; flex: 1; }
    .apps button { position: relative; }
    .apps .on::after { content: ""; position: absolute; left: 4px; right: 4px; bottom: -2px; height: 2px; background: #76b9ed; }
    .apps .front { background: #3f3f3f; }
    .apps .front::after { left: 0; right: 0; }
    .tray { display: flex; }
    .tray button { width: 24px; }
    .tray .people { width: 34px; }
    .tray .lang { margin-left: 6px; width: 26px; }
    .tray .clock { width: 44px; margin-left: 13px; white-space: nowrap; }
    .tray .note { width: 34px; margin-left: 12px; }
    .tray .end { width: 5px; margin-left: 11px; border-left: 1px solid #555; }
  `;

  private icon(name: string, size?: number) {
    const [box, shape] = ICONS[name];
    const px = size ?? box;
    return html`<svg width=${px} height=${px} viewBox=${`0 0 ${box} ${box}`} aria-hidden="true">${shape}</svg>`;
  }

  private caret(color = "#333") {
    return html`<svg class="caret" viewBox="0 0 6 5" aria-hidden="true"><path d="M0 0h6L3 5z" fill=${color}></path></svg>`;
  }

  private row(r: Row) {
    return html`<li class="row l${r.level}">
      ${r.toggle ? html`<button class="toggle" aria-label="Expand">${this.icon(r.toggle)}</button>` : html`<span class="toggle"></span>`}
      <div class="item">
        ${r.bulb ? html`<button class="slot eye" aria-label="Visibility">${this.icon(r.bulb)}</button>` : ""}
        <span class="slot">${this.icon(r.icon)}</span><span class="text">${r.label}</span>
      </div>
    </li>`;
  }

  private combo(id: string, label: string, icon: string, value: string) {
    return html`<div class="field">
      <label for=${id}>${label}</label>
      <div class="combo">${this.icon(icon)}<select id=${id}><option>${value}</option></select>${this.caret()}</div>
    </div>`;
  }

  render() {
    return html`
      <svg class="defs" width="0" height="0" aria-hidden="true"><defs>
        <linearGradient id="gGray" x1="0" y1="0" x2="1" y2="1"><stop offset="0" stop-color="#fff"></stop><stop offset="1" stop-color="#aab0bb"></stop></linearGradient>
        <linearGradient id="gPale" x1="0" y1="0" x2="1" y2="1"><stop offset="0" stop-color="#fff"></stop><stop offset="1" stop-color="#bdd4f0"></stop></linearGradient>
        <linearGradient id="gPlate" x1="0" y1="0" x2="1" y2="1"><stop offset="0" stop-color="#e9ebee"></stop><stop offset="1" stop-color="#c3c7ce"></stop></linearGradient>
        <linearGradient id="gBlue" x1="0" y1="0" x2="1" y2="1"><stop offset="0" stop-color="#a9c7ea"></stop><stop offset="1" stop-color="#84abd9"></stop></linearGradient>
        <linearGradient id="gSky" x1="0" y1="0" x2="0" y2="1"><stop offset="0" stop-color="#a6d8f5"></stop><stop offset="1" stop-color="#f2f7e8"></stop></linearGradient>
        <linearGradient id="gTri" x1="0" y1="0" x2="1" y2="0"><stop offset="0" stop-color="#eee"></stop><stop offset="1" stop-color="#444"></stop></linearGradient>
      </defs></svg>

      <header class="title">
        ${this.icon("fusion")}<span class="name">Autodesk Fusion 360 (Education License)</span>
        <div class="wins">
          <button aria-label="Minimize">${this.icon("min")}</button>
          <button aria-label="Restore">${this.icon("restore")}</button>
          <button aria-label="Close">${this.icon("close")}</button>
        </div>
      </header>

      <div class="tabs">
        <div class="quick">
          <button aria-label="Data panel">${this.icon("grid", 14)}</button>
          <button aria-label="File">${this.icon("file", 14)}${this.caret("#666")}</button>
          <button aria-label="Save">${this.icon("save", 14)}</button>
          <div class="pair">
            <button aria-label="Undo">${this.icon("undo", 14)}${this.caret("#666")}</button>
            <button aria-label="Redo">${this.icon("redo", 14)}${this.caret("#999")}</button>
          </div>
        </div>
        <div class="tab">
          <span class="doc">${this.icon("docCube")}Lantern v3*</span>
          <button class="x" aria-label="Close tab">${this.icon("cross", 14)}</button>
        </div>
        <button class="newtab" aria-label="New tab">${this.icon("plusTab", 14)}</button>
        <div class="account">
          <button aria-label="Comments">${this.icon("comment")}</button>
          <button class="jobs" aria-label="Job status">${this.icon("clock")}1</button>
          <button class="user">Lamiaa M Nail</button>
          <button aria-label="Help">${this.icon("help")}</button>
        </div>
      </div>

      <main class="work">
        <solid-scene class="canvas"></solid-scene>
        <div class="hint">Select edges/faces/features to Fillet</div>
        <svg class="cube" viewBox="1270 55 76 100" role="img" aria-label="View cube">
          <path d="M1297.500 78l41.500 17-17 41-43-18z" fill="#dcdddf" stroke="#9a9a9a" stroke-dasharray="4 2"></path>
          <path d="M1300 88l28 11-10 26-28-11z" fill="#cdd0d4"></path>
          <path d="M1279 118l6 9 35 14 4-6z" fill="#f3f3f3" stroke="#999" stroke-dasharray="3 2"></path>
          <text transform="translate(1309 106) rotate(202)" text-anchor="middle" dominant-baseline="central" font-size="11" font-weight="bold" fill="#85888d">BOTTOM</text>
          <path d="M1278 118l23-48" stroke="#7b7bf5" stroke-width="2"></path>
          <path d="M1278 118l51 22" stroke="#f06a6a" stroke-width="2"></path>
          <path d="M1278 118l6 10" stroke="#5fe05f" stroke-width="2"></path>
          <g font-size="12" text-anchor="middle"><text x="1302" y="70" fill="#7b7bf5">Z</text><text x="1335" y="148" fill="#f57878" font-weight="bold">X</text><text x="1284" y="134" font-size="9" fill="#5fe05f">Y</text></g>
        </svg>

        <nav class="ribbon">
          <div class="mode"><span class="grip"></span><button>MODEL ${this.caret()}</button></div>
          ${TOOLS.map(([name, icons]) => html`<div class="group">
            <div class="icons">${icons.map((i) => html`<button aria-label=${i}>${this.icon(i)}</button>`)}</div>
            <button class="menu">${name}${this.caret()}</button>
          </div>`)}
        </nav>

        <div class="bar browser">
          <button aria-label="Collapse">${this.icon("back")}</button>
          <span class="cap">BROWSER</span>
          <button aria-label="Hide">${this.icon("minus")}</button><span class="edge"></span>
        </div>
        <ul class="tree">
          <li class="row root">
            <button class="toggle" aria-label="Collapse">${this.icon("triOpen")}</button>
            <div class="item">
              <button class="slot eye" aria-label="Visibility">${this.icon("bulbOn")}</button>
              <span class="picked"><span class="slot">${this.icon("component")}</span><span class="text">Lantern v3</span></span>
              <button aria-label="Activate">${this.icon("target")}</button>
            </div>
          </li>
          ${TREE.map((r) => this.row(r))}
        </ul>

        <div class="bottom">
          <div class="bar comments">
            <span class="cap">COMMENTS</span>
            <button aria-label="Show">${this.icon("plus")}</button><span class="edge"></span>
          </div>
          <div class="nav">
            <button class="drop" aria-label="Orbit">${this.icon("orbit")}${this.caret()}</button>
            <button aria-label="Look at">${this.icon("look")}</button>
            <button aria-label="Pan">${this.icon("hand")}</button>
            <button aria-label="Zoom">${this.icon("zoomPm")}</button>
            <button class="drop" aria-label="Fit">${this.icon("fit")}${this.caret()}</button>
            <button class="drop view" aria-label="Display">${this.icon("display")}${this.caret()}</button>
            <button class="drop" aria-label="Grid">${this.icon("mesh")}${this.caret()}</button>
            <button class="drop" aria-label="Viewports">${this.icon("panes")}${this.caret()}</button>
          </div>
        </div>

        <section class="panel">
          <div class="phead">
            <span class="edge"></span>${this.icon("minus")}<h2>FILLET</h2>
            <button aria-label="Dock">${this.icon("fwd")}</button>
          </div>
          <div class="form">
            ${this.combo("type", "Type", "fillet", "Fillet")}
            <div class="list">
              <button aria-label="Add">${this.icon("add")}</button>
              <button aria-label="Remove">${this.icon("del")}</button>
            </div>
            ${this.combo("radius", "Radius Type", "fillet", "Constant Radius")}
            <div class="field"><label for="edges">Edges/Faces/Features</label><button id="edges" class="pick">${this.icon("cursor")}Select</button></div>
            <div class="field"><label for="chain">Tangent Chain</label>
              <input id="chain" class="tick" type="checkbox" .checked=${this.tangent}
                @change=${(e: Event) => (this.tangent = (e.target as HTMLInputElement).checked)} /></div>
            <hr class="rule" />
            ${this.combo("corner", "Corner Type", "ball", "Rolling Ball")}
          </div>
          <div class="foot">${this.icon("info")}<button disabled>OK</button><button>Cancel</button></div>
        </section>
      </main>

      <div class="time">
        <div class="player">
          ${["first", "prev", "play", "next", "last"].map((n) => html`<button aria-label=${n}>${this.icon(n)}</button>`)}
        </div>
        <div class="steps">
          ${["sketchS", "extrude", "sketchS", "move", "jointS", "revolve", "extrude", "fillet"].map(
            (n) => html`<button class="step" aria-label=${n}>${this.icon(n)}</button>`
          )}
          <svg class="marker" width="12" height="34" viewBox="0 0 12 34" aria-hidden="true"><path d="M0 1h12v5L8 10H7v23H5V10H4L0 6z" fill="#666"></path></svg>
        </div>
        <button aria-label="Timeline settings">${this.icon("gear")}</button>
      </div>

      <footer class="task">
        <button aria-label="Start">${this.icon("win")}</button>
        <button aria-label="Search">${this.icon("search")}</button>
        <button aria-label="Task view">${this.icon("task")}</button>
        <div class="apps">
          <button class="on" aria-label="Explorer">${this.icon("explorer")}</button>
          <button aria-label="Z">${this.icon("zed")}</button>
          <button class="on" aria-label="App"></button>
          <button class="on" aria-label="App"></button>
          <button class="on" aria-label="Chrome">${this.icon("chrome")}</button>
          <button class="on front" aria-label="Fusion 360">${this.icon("fusion")}</button>
          <button class="on" aria-label="Paint">${this.icon("paint")}</button>
        </div>
        <div class="tray">
          <button class="people" aria-label="People">${this.icon("people")}</button>
          ${["chev", "cloud", "battery", "wifi", "vol"].map((n) => html`<button aria-label=${n}>${this.icon(n)}</button>`)}
          <button class="lang">ENG</button>
          <button class="clock">2:49 PM</button>
          <button class="note" aria-label="Notifications">${this.icon("notif")}</button>
          <span class="end"></span>
        </div>
      </footer>
    `;
  }
}
